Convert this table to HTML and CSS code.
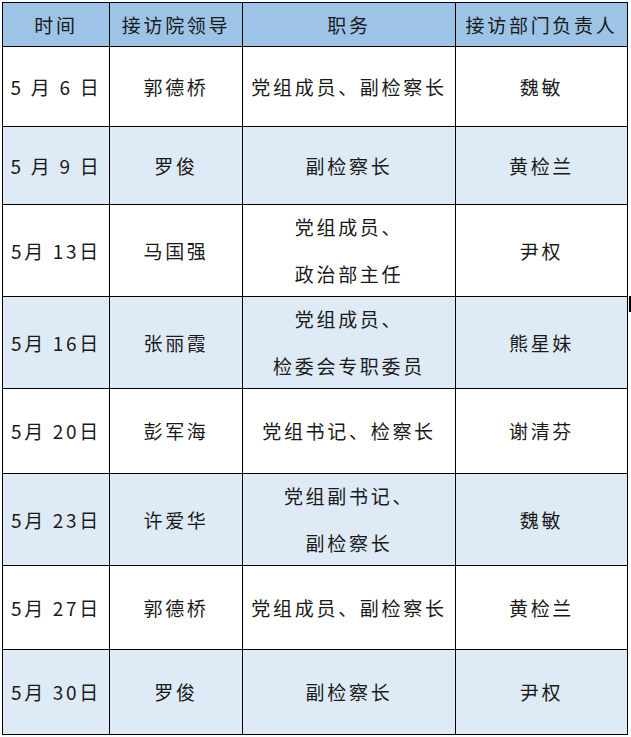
FILE: index.html
```html
<!DOCTYPE html>
<html lang="zh-CN">
<head>
<meta charset="utf-8">
<title>接访安排</title>
<link rel="stylesheet" href="styles.css">
</head>
<body>
<table class="schedule">
  <colgroup>
    <col class="c-date">
    <col class="c-leader">
    <col class="c-post">
    <col class="c-dept">
  </colgroup>
  <thead>
    <tr class="r-head">
      <th>时间</th><th>接访院领导</th><th>职务</th><th>接访部门负责人</th>
    </tr>
  </thead>
  <tbody>
    <tr class="r80"><td>5 月 6 日</td><td>郭德桥</td><td>党组成员、副检察长</td><td>魏敏</td></tr>
    <tr class="r78 alt"><td>5 月 9 日</td><td>罗俊</td><td>副检察长</td><td>黄检兰</td></tr>
    <tr class="r92"><td>5月 13日</td><td>马国强</td><td><div class="two"><span>党组成员、</span><span>政治部主任</span></div></td><td>尹权</td></tr>
    <tr class="r92 alt"><td>5月 16日</td><td>张丽霞</td><td><div class="two"><span>党组成员、</span><span>检委会专职委员</span></div></td><td>熊星妹</td></tr>
    <tr class="r85"><td>5月 20日</td><td>彭军海</td><td>党组书记、检察长</td><td>谢清芬</td></tr>
    <tr class="r92 alt"><td>5月 23日</td><td>许爱华</td><td><div class="two"><span>党组副书记、</span><span>副检察长</span></div></td><td>魏敏</td></tr>
    <tr class="r84"><td>5月 27日</td><td>郭德桥</td><td>党组成员、副检察长</td><td>黄检兰</td></tr>
    <tr class="r85 alt"><td>5月 30日</td><td>罗俊</td><td>副检察长</td><td>尹权</td></tr>
  </tbody>
</table>
<div class="caret"></div>
</body>
</html>
```
FILE: styles.css
```css
html, body {
  margin: 0;
  padding: 0;
  background: #ffffff;
}
body {
  position: relative;
  width: 631px;
  height: 737px;
  overflow: hidden;
  font-family: "Noto Sans CJK SC", "Noto Sans", sans-serif;
  color: #1a1a1a;
}
.schedule {
  margin: 2px 0 0 2px;
  border-collapse: collapse;
  table-layout: fixed;
  width: 626px;
}
.c-date { width: 107px; }
.c-leader { width: 133px; }
.c-post { width: 213px; }
.c-dept { width: 172px; }
.schedule th,
.schedule td {
  border: 1px solid #000;
  padding: 0;
  text-align: center;
  vertical-align: middle;
  font-size: 19px;
  font-weight: 400;
  letter-spacing: 2.7px;
  line-height: 24px;
  white-space: nowrap;
}
.r-head th {
  background: #9dc3e6;
  height: 43px;
}
.alt td { background: #deeaf6; }
.r78 td { height: 77px; }
.r80 td { height: 79px; }
.r84 td { height: 83px; }
.r85 td { height: 84px; }
.r92 td { height: 91px; }
.two {
  display: flex;
  flex-direction: column;
  align-items: center;
  gap: 23px;
}
.two span { display: block; }
.caret {
  position: absolute;
  left: 629px;
  top: 296px;
  width: 2px;
  height: 16px;
  background: #000;
}
```
